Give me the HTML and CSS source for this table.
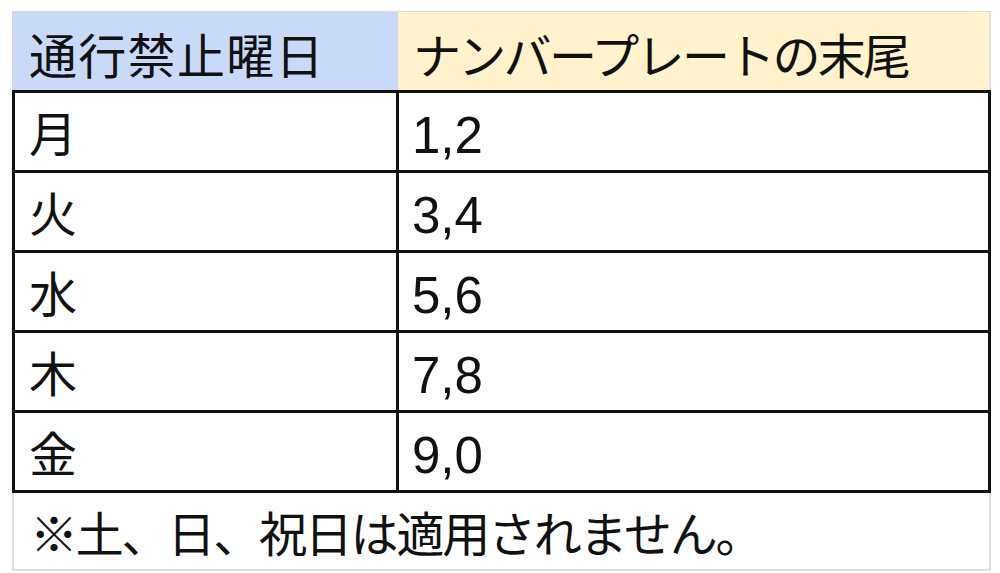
FILE: index.html
```html
<!DOCTYPE html>
<html lang="ja">
<head>
<meta charset="utf-8">
<link rel="stylesheet" href="styles.css">
</head>
<body>
<div class="sheet">
  <div class="head">
    <div class="hc blue">通行禁止曜日</div>
    <div class="hc yellow">ナンバープレートの末尾</div>
  </div>
  <div class="body">
    <div class="row"><div class="c day">月</div><div class="c num">1,2</div></div>
    <div class="row"><div class="c day">火</div><div class="c num">3,4</div></div>
    <div class="row"><div class="c day">水</div><div class="c num">5,6</div></div>
    <div class="row"><div class="c day">木</div><div class="c num">7,8</div></div>
    <div class="row"><div class="c day">金</div><div class="c num">9,0</div></div>
  </div>
  <div class="foot">※土、日、祝日は適用されません。</div>
</div>
</body>
</html>
```

FILE: styles.css
```css
html, body {
  margin: 0;
  padding: 0;
  background: #ffffff;
}
body {
  font-family: "Liberation Sans", "Noto Sans CJK JP", sans-serif;
  color: #111111;
}
.sheet {
  margin: 11px 0 0 12px;
  width: 979px;
}
.head {
  display: grid;
  grid-template-columns: 386px 593px;
  height: 79px;
}
.hc {
  display: flex;
  align-items: center;
  padding: 14px 0 0 16px;
  box-sizing: border-box;
  font-size: 48px;
  line-height: 1;
  border-top: 1px solid #d6d6d6;
}
.blue {
  background: #c9daf8;
  border-left: 1px solid #d6d6d6;
  letter-spacing: 1.3px;
}
.yellow {
  background: #fff2cc;
  border-right: 2px solid #e2e2e2;
  padding-left: 15px;
  letter-spacing: -2.7px;
}
.body {
  border: 3px solid #111111;
  border-bottom: none;
}
.row {
  display: grid;
  grid-template-columns: 384px 1fr;
  height: 80px;
  box-sizing: border-box;
  border-bottom: 3px solid #111111;
}
.c {
  display: flex;
  align-items: center;
  padding: 8px 0 0 14px;
  box-sizing: border-box;
  line-height: 1;
}
.day {
  font-size: 48px;
  border-right: 3px solid #111111;
}
.num {
  font-size: 51px;
  padding-left: 13px;
}
.foot {
  height: 78px;
  box-sizing: border-box;
  display: flex;
  align-items: center;
  padding: 9px 0 0 16px;
  font-size: 48px;
  line-height: 1;
  letter-spacing: -2.2px;
  border-left: 2px solid #dcdcdc;
  border-right: 2px solid #dcdcdc;
  border-bottom: 2px solid #dcdcdc;
}
```
